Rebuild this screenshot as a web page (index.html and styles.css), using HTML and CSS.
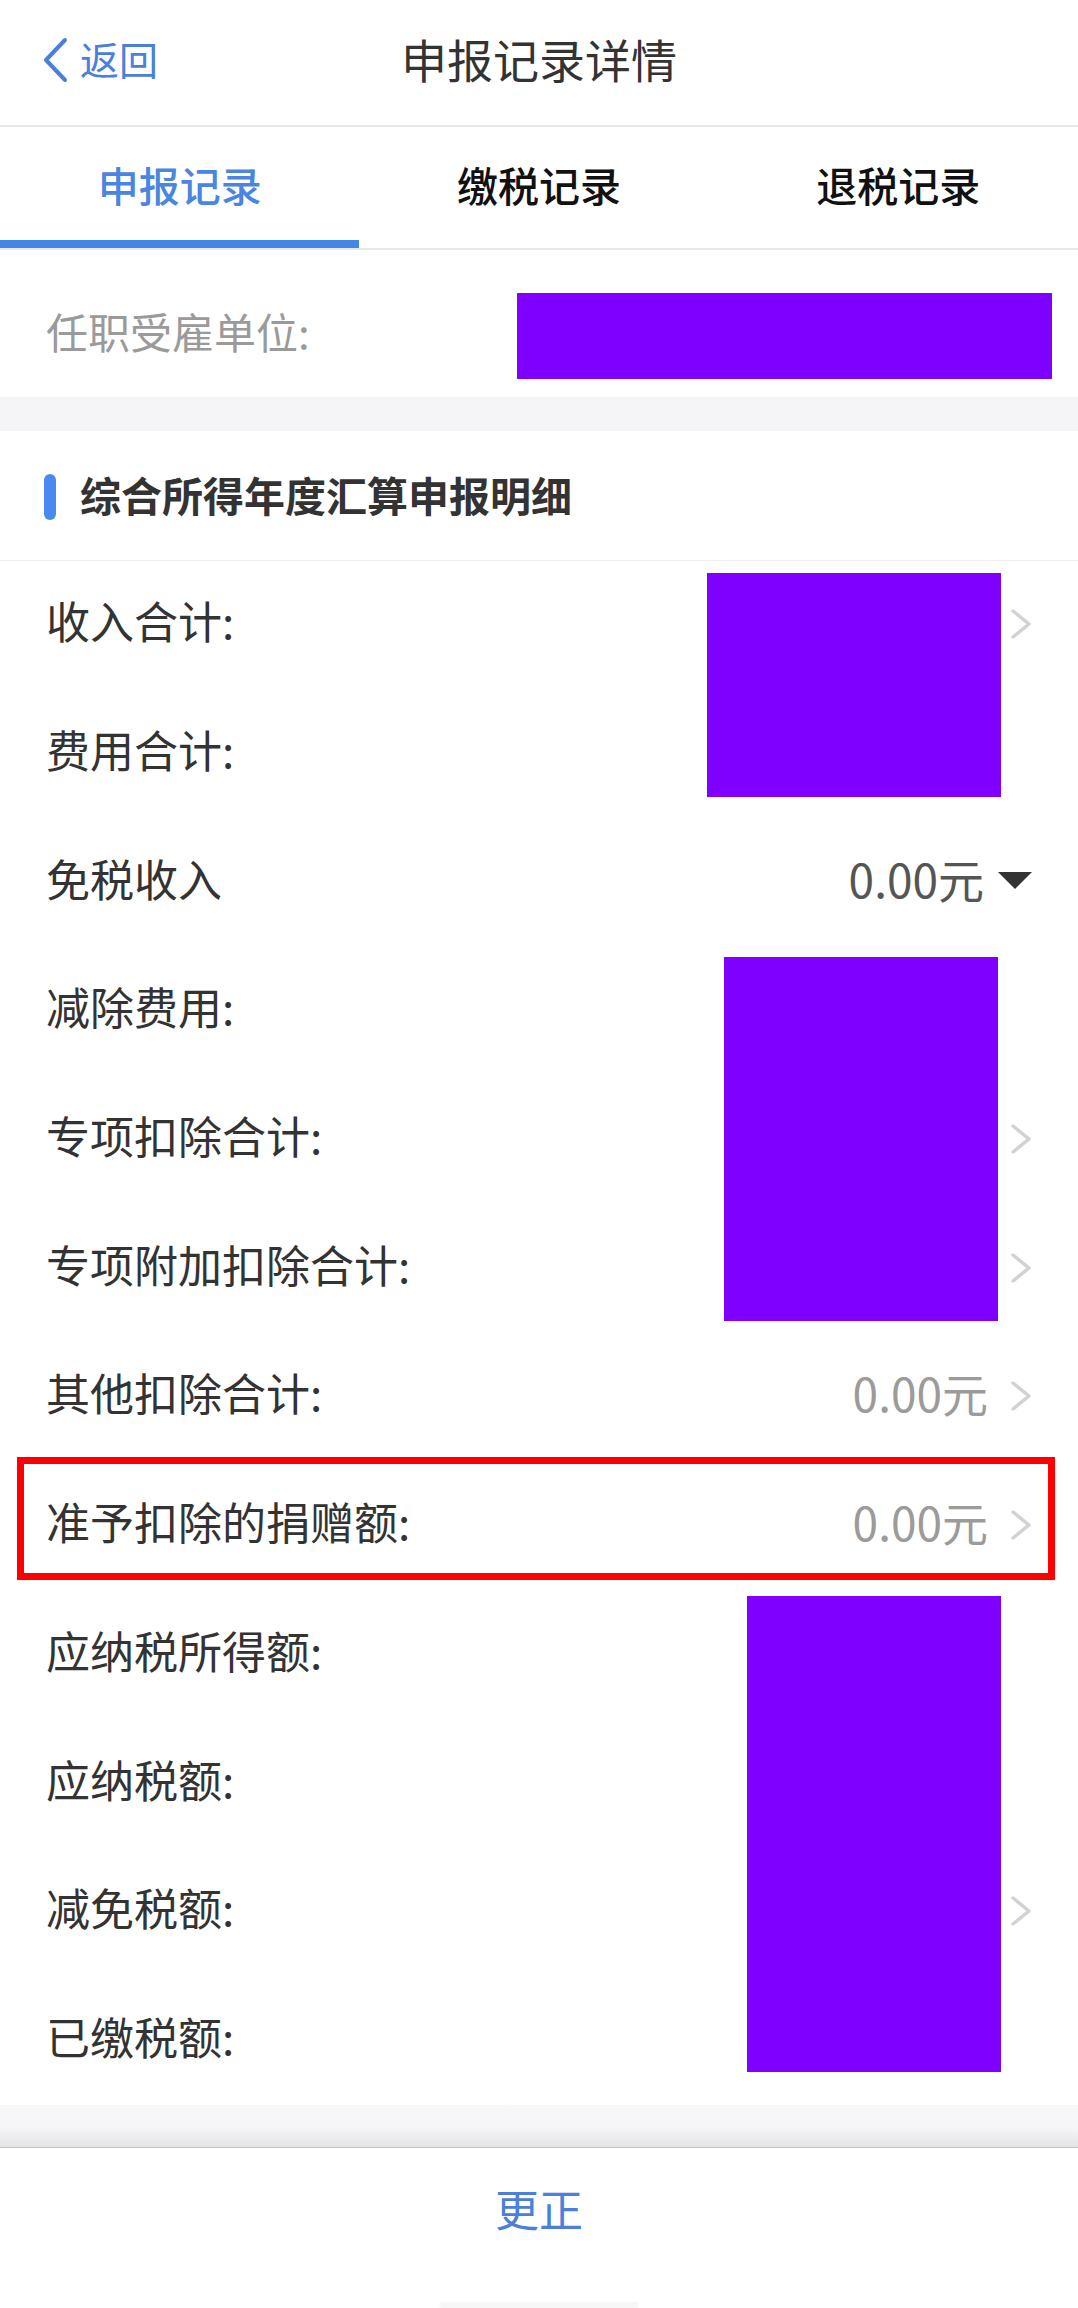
FILE: index.html
```html
<!DOCTYPE html>
<html lang="zh-CN">
<head>
  <meta charset="UTF-8">
  <title>申报记录详情</title>
  <link rel="stylesheet" href="styles.css">
</head>
<body>

  <header class="nav-bar">
    <a class="nav-back" href="#">
      <svg class="back-icon" viewBox="0 0 26 46" width="26" height="46">
        <polyline points="23,3 4,23 23,43" fill="none" stroke="#4a80dc" stroke-width="4" stroke-linecap="round" stroke-linejoin="round"/>
      </svg>
      <span>返回</span>
    </a>
    <h1 class="nav-title">申报记录详情</h1>
  </header>

  <nav class="tabs">
    <div class="tab active">申报记录</div>
    <div class="tab">缴税记录</div>
    <div class="tab">退税记录</div>
  </nav>

  <div class="employer-row">
    <span class="employer-label">任职受雇单位:</span>
    <span class="redact employer-value"></span>
  </div>

  <div class="gap"></div>

  <section class="detail">
    <h2 class="section-title"><i class="title-bar"></i>综合所得年度汇算申报明细</h2>

    <div class="rows">
      <div class="row">
        <span class="label">收入合计:</span>
        <svg class="arrow" viewBox="0 0 22 30"><polyline points="3,2 19,15 3,28"/></svg>
      </div>
      <div class="row"><span class="label">费用合计:</span></div>
      <div class="row">
        <span class="label">免税收入</span>
        <span class="value dark">0.00元</span>
        <span class="caret"></span>
      </div>
      <div class="row"><span class="label">减除费用:</span></div>
      <div class="row">
        <span class="label">专项扣除合计:</span>
        <svg class="arrow" viewBox="0 0 22 30"><polyline points="3,2 19,15 3,28"/></svg>
      </div>
      <div class="row">
        <span class="label">专项附加扣除合计:</span>
        <svg class="arrow" viewBox="0 0 22 30"><polyline points="3,2 19,15 3,28"/></svg>
      </div>
      <div class="row">
        <span class="label">其他扣除合计:</span>
        <span class="value">0.00元</span>
        <svg class="arrow" viewBox="0 0 22 30"><polyline points="3,2 19,15 3,28"/></svg>
      </div>
      <div class="row">
        <span class="label">准予扣除的捐赠额:</span>
        <span class="value">0.00元</span>
        <svg class="arrow" viewBox="0 0 22 30"><polyline points="3,2 19,15 3,28"/></svg>
      </div>
      <div class="row"><span class="label">应纳税所得额:</span></div>
      <div class="row"><span class="label">应纳税额:</span></div>
      <div class="row">
        <span class="label">减免税额:</span>
        <svg class="arrow" viewBox="0 0 22 30"><polyline points="3,2 19,15 3,28"/></svg>
      </div>
      <div class="row"><span class="label">已缴税额:</span></div>

      <!-- redaction blocks and the marker box lie over the rows -->
      <div class="redact block-a"></div>
      <div class="redact block-b"></div>
      <div class="redact block-c"></div>
      <div class="mark-box"></div>
    </div>
  </section>

  <div class="bottom-gap"></div>

  <footer class="footer">
    <button class="fix-btn">更正</button>
    <div class="home-bar"></div>
  </footer>

</body>
</html>
```

FILE: styles.css
```css
body {
  margin: 0;
  background: #fff;
  font-family: "Noto Sans CJK SC", "Noto Sans", sans-serif;
  color: #333;
}

.nav-bar {
  height: 127px;
  border-bottom: 2px solid #e6e6e6;
  display: flex;
  align-items: center;
  justify-content: center;
  position: relative;
  box-sizing: border-box;
  padding-bottom: 10px;
}
.nav-back {
  position: absolute;
  left: 42px;
  top: 37px;
  display: flex;
  align-items: center;
  gap: 12px;
  color: #4a80dc;
  text-decoration: none;
  font-size: 39px;
  line-height: 46px;
}
.nav-back span {
  position: relative;
  top: -2px;
}
.back-icon {
  display: block;
}
.nav-title {
  margin: 0;
  font-size: 46px;
  font-weight: 400;
  line-height: 1;
  color: #333;
}

.tabs {
  display: flex;
  height: 121px;
  border-bottom: 2px solid #e8e8e8;
}
.tab {
  flex: 1;
  display: flex;
  align-items: center;
  justify-content: center;
  font-size: 41px;
  font-weight: 500;
  color: #111;
  box-sizing: border-box;
  padding-bottom: 8px;
}
.tab.active {
  color: #4a85e0;
  border-bottom: 8px solid #4286e8;
  padding-bottom: 0;
}

.employer-row {
  height: 147px;
  display: flex;
  align-items: center;
  padding: 24px 26px 0 46px;
  box-sizing: border-box;
}
.employer-label {
  font-size: 42px;
  color: #9a9a9a;
  position: relative;
  top: -5px;
}
.employer-value {
  margin-left: auto;
  width: 535px;
  height: 86px;
}

.redact {
  background: #8000ff;
  display: block;
}

.gap {
  height: 34px;
  background: #f5f5f7;
}

.section-title {
  margin: 0;
  height: 130px;
  display: flex;
  align-items: center;
  gap: 24px;
  padding-left: 44px;
  padding-bottom: 4px;
  font-size: 41px;
  font-weight: 700;
  color: #333;
  border-bottom: 1px solid #ededed;
  box-sizing: border-box;
}
.title-bar {
  width: 12px;
  height: 46px;
  border-radius: 6px;
  background: #4a8af0;
  position: relative;
  top: 3px;
}

.rows {
  position: relative;
}
.row {
  height: 128.7px;
  display: flex;
  align-items: center;
  padding: 0 46px 10px;
  box-sizing: border-box;
  font-size: 44px;
}
.label {
  color: #333;
}
.value {
  margin-left: auto;
  color: #9b9b9b;
  font-size: 46px;
}
.value.dark {
  color: #555;
}
.arrow {
  margin-left: auto;
  width: 22px;
  height: 30px;
  fill: none;
  stroke: #d2d2d2;
  stroke-width: 3.5;
  stroke-linecap: round;
  stroke-linejoin: round;
  position: relative;
  top: 4px;
}
.value + .arrow {
  margin-left: 22px;
}
.caret {
  margin-left: 14px;
  width: 0;
  height: 0;
  border-left: 17px solid transparent;
  border-right: 17px solid transparent;
  border-top: 17px solid #333;
  position: relative;
  top: 3px;
}

.block-a {
  position: absolute;
  left: 707px;
  top: 12px;
  width: 294px;
  height: 224px;
}
.block-b {
  position: absolute;
  left: 724px;
  top: 396px;
  width: 274px;
  height: 364px;
}
.block-c {
  position: absolute;
  left: 747px;
  top: 1035px;
  width: 254px;
  height: 476px;
}
.mark-box {
  position: absolute;
  left: 17px;
  top: 896px;
  width: 1038px;
  height: 123px;
  box-sizing: border-box;
  border: 7px solid #f00;
}

.bottom-gap {
  height: 42px;
  background: linear-gradient(#f8f8fa 0%, #f5f5f8 55%, #e4e4e6 100%);
  border-bottom: 1px solid #c4c4c4;
}

.footer {
  height: 160px;
  display: flex;
  flex-direction: column;
  align-items: center;
}
.fix-btn {
  margin-top: 36px;
  border: none;
  background: none;
  padding: 0;
  font-family: inherit;
  font-size: 44px;
  line-height: 48px;
  color: #4a80dc;
}
.home-bar {
  margin-top: 70px;
  width: 200px;
  height: 32px;
  background: #f7f7f7;
  border-radius: 4px;
}
```
